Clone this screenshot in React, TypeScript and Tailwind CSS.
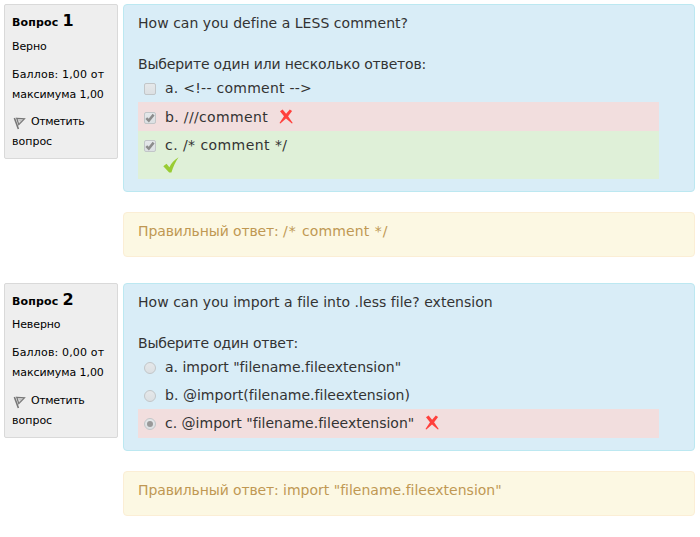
import type { ReactNode } from "react";

function FlagIcon() {
  return (
    <svg className="mr-[5px] inline-block h-3.5 w-3.5 align-[-5px]" viewBox="0 0 14 14" fill="none">
      <path d="M2.4 2 6.4 13" stroke="#777" strokeWidth="1.6" />
      <path d="M4.7 2.3 12.4 2.9 6.8 8.6Z" stroke="#777" strokeWidth="1.3" />
      <path d="m6.4 4.2 3.2.1-2.4 2.2" stroke="#aaa" strokeWidth=".8" />
    </svg>
  );
}

function CrossIcon() {
  return (
    <svg className="block h-[15px] w-[14px] shrink-0" viewBox="0 0 14 15">
      <path
        d="M1 2.2 3.6.6 7.1 4.7 10.8.6 13.1 2.1 9.1 7.2 13.7 13.9 12.9 14.4 7 9.6 1.4 14.5.5 13.9 5 7.2Z"
        fill="#ff403c"
      />
    </svg>
  );
}

function TickIcon() {
  return (
    <svg className="block h-4 w-4" viewBox="0 0 16 16">
      <path d="M.3 9.3 3.5 6.8 6.4 10.2C8.4 6.3 11 3 15.6.3 12.7 4.5 10.2 9.8 8.4 15.4L6.2 15.5Z" fill="#99cc33" />
    </svg>
  );
}

function Mark({ kind, checked }: { kind: "checkbox" | "radio"; checked?: boolean }) {
  return (
    <span
      role={kind}
      aria-checked={!!checked}
      className={
        "mt-[9px] ml-1.5 flex h-3 w-3 shrink-0 items-center justify-center border border-[#c2c6c8] bg-linear-to-b from-[#e5e8ea] to-[#dce0e3] " +
        (kind === "radio" ? "rounded-full" : "rounded-[2px]")
      }
    >
      {checked && kind === "radio" && <span className="h-1.5 w-1.5 rounded-full bg-[#999]" />}
      {checked && kind === "checkbox" && (
        <svg className="h-2.5 w-2.5 shrink-0" viewBox="0 0 10 10" fill="none">
          <path d="m1.3 5.1 2.5 2.5L8.6 1.6" stroke="#8c8c8c" strokeWidth="2.5" />
        </svg>
      )}
    </span>
  );
}

function Option({
  kind,
  checked,
  row,
  text,
  spacing = "",
  icon,
  below,
}: {
  kind: "checkbox" | "radio";
  checked?: boolean;
  row: string;
  text: string;
  spacing?: string;
  icon?: ReactNode;
  below?: ReactNode;
}) {
  return (
    <div className={"flex items-start " + row}>
      <Mark kind={kind} checked={checked} />
      <div className="ml-[9px]">
        <div className="flex h-7 items-center whitespace-nowrap">
          <span className={spacing}>{text}</span>
          {icon}
        </div>
        {below}
      </div>
    </div>
  );
}

function Info({
  num,
  state,
  score,
  stateGap,
  flagGap,
}: {
  num: string;
  state: string;
  score: string;
  stateGap: string;
  flagGap: string;
}) {
  return (
    <aside className="h-[155px] w-[114px] shrink-0 rounded-[2px] border border-[#d9d9d9] bg-[#eee] pl-[7px] text-[11px] leading-5 whitespace-nowrap text-black">
      <h3 className="mt-1.5 h-5 font-bold">
        <span className="tracking-[0.15px]">Вопрос </span>
        <span className="text-base leading-5">{num}</span>
      </h3>
      <div className={"tracking-[-0.1px] " + stateGap}>{state}</div>
      <div className="mt-2">
        <span className="tracking-[0.16px]">{score}</span>
        <br />
        <span className="tracking-[-0.07px]">максимума 1,00</span>
      </div>
      <div className={flagGap}>
        <FlagIcon />
        <span className="tracking-[-0.4px]">Отметить</span>
        <br />
        вопрос
      </div>
    </aside>
  );
}

function Question({
  info,
  height,
  title,
  prompt,
  answer,
  children,
}: {
  info: ReactNode;
  height: string;
  title: ReactNode;
  prompt: ReactNode;
  answer: ReactNode;
  children: ReactNode;
}) {
  return (
    <section className="flex gap-[5px]">
      {info}
      <div className="w-[572px] text-sm leading-5 whitespace-nowrap">
        <div className={"rounded border border-[#bce8f1] bg-[#d9edf7] pt-2 pr-[35px] pl-3.5 text-[#333] " + height}>
          <p className="tracking-[0.035px]">{title}</p>
          <p className="mt-[21px]">{prompt}</p>
          {children}
        </div>
        <div className="mt-5 h-[45px] rounded border border-[#fbeed5] bg-[#fcf8e3] pt-2 pl-3.5 text-[#c09853]">
          <span className="tracking-[-0.12px]">Правильный ответ: </span>
          {answer}
        </div>
      </div>
    </section>
  );
}

export default function App() {
  return (
    <main className="h-[537px] w-[700px] overflow-hidden bg-white pt-1 pl-1 font-['Verdana','DejaVu_Sans',sans-serif] [font-variant-ligatures:none]">
      <Question
        info={<Info num="1" state="Верно" score="Баллов: 1,00 от" stateGap="mt-1.5" flagGap="mt-[7px]" />}
        height="h-[188px]"
        title="How can you define a LESS comment?"
        prompt={<span className="tracking-[-0.165px]">Выберите один или несколько ответов:</span>}
        answer={
          <>
            <span className="tracking-[0.9px]">/* </span>
            <span className="tracking-[0.15px]">comment</span>
            <span className="tracking-[0.9px]"> */</span>
          </>
        }
      >
        <Option kind="checkbox" row="h-7" text="a. <!-- comment -->" spacing="tracking-[0.26px]" />
        <Option
          kind="checkbox"
          checked
          row="h-[29px] bg-[#f2dede] pt-px"
          text="b. ///comment"
          spacing="tracking-[0.35px]"
          icon={<span className="-mt-0.5 ml-[11px]"><CrossIcon /></span>}
        />
        <Option
          kind="checkbox"
          checked
          row="h-12 bg-[#dff0d8]"
          text="c. /* comment */"
          spacing="tracking-[0.44px]"
          below={<div className="-mt-0.5 -ml-0.5"><TickIcon /></div>}
        />
      </Question>
      <div className="h-[26px]" />
      <Question
        info={<Info num="2" state="Неверно" score="Баллов: 0,00 от" stateGap="mt-[5px]" flagGap="mt-2" />}
        height="h-[168px]"
        title="How can you import a file into .less file? extension"
        prompt={<span className="tracking-[-0.22px]">Выберите один ответ:</span>}
        answer={'import "filename.fileextension"'}
      >
        <Option kind="radio" row="h-7" text={'a. import "filename.fileextension"'} />
        <Option kind="radio" row="h-7" text="b. @import(filename.fileextension)" spacing="tracking-[0.03px]" />
        <Option
          kind="radio"
          checked
          row="h-[29px] bg-[#f2dede]"
          text={'c. @import "filename.fileextension"'}
          icon={<span className="-mt-px ml-[11px]"><CrossIcon /></span>}
        />
      </Question>
    </main>
  );
}
